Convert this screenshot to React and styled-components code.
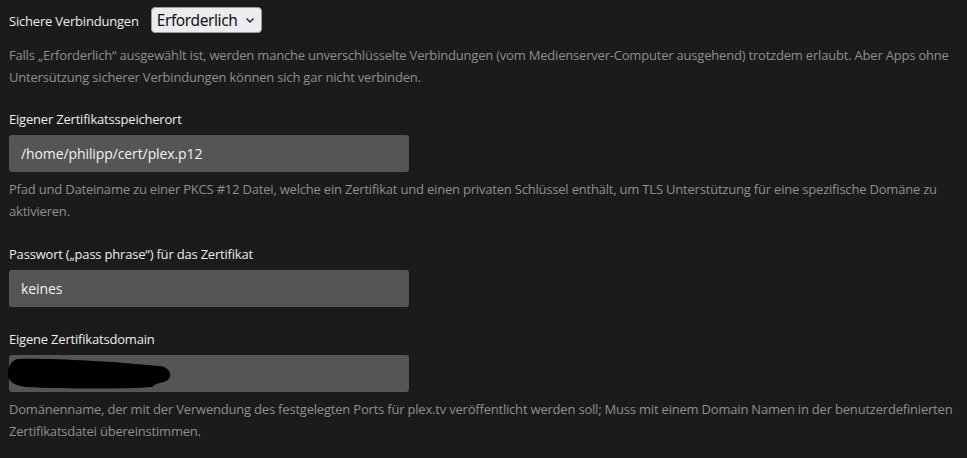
import React from 'react';
import styled, { createGlobalStyle } from 'styled-components';

const GlobalStyle = createGlobalStyle`
  html, body {
    margin: 0;
    background: #1b1b1b;
  }
  body {
    font-family: "Open Sans", "Noto Sans", sans-serif;
  }
`

const Page = styled.div`
  padding: 7px 9px 0 9px;
  width: 950px;
  color: #eaeaea;
  font-size: 13px;
  letter-spacing: -0.2px;
`

const Row = styled.div`
  display: flex;
  align-items: center;
  gap: 12px;
  height: 26px;
`

const Label = styled.div`
  line-height: 22px;
  color: #ececec;
  margin-bottom: ${props => props.inline ? '0' : '5px'};
  margin-top: ${props => props.inline ? '2px' : '0'};
`

const SelectBox = styled.div`
  display: flex;
  align-items: center;
  gap: 8px;
  height: 24px;
  padding: 0 6px 0 5px;
  background: #ececf0;
  border: 1px solid #9a9a9a;
  border-radius: 4px;
  color: #111;
  font-family: "Noto Sans", "Open Sans", sans-serif;
  font-size: 15.5px;
  letter-spacing: -0.4px;
`

const Help = styled.p`
  margin: ${props => props.first ? '11px' : '6px'} 0 0 0;
  line-height: 22px;
  color: #8e8e8e;
`

const Group = styled.div`
  margin-top: ${props => props.gap || 21}px;
`

const FieldWrap = styled.div`
  position: relative;
  width: 400px;
`

const Input = styled.div`
  box-sizing: border-box;
  width: 400px;
  height: 37px;
  padding: 0 12px;
  display: flex;
  align-items: center;
  background: #555555;
  border-radius: 3px;
  color: #f2f2f2;
  font-size: 14px;
  letter-spacing: -0.1px;
`

const Redaction = styled.svg`
  position: absolute;
  left: -2px;
  top: 2px;
`

function Chevron() {
  return (
    <svg width="10" height="7" viewBox="0 0 10 7">
      <path d="M1.5 1.5 L5 5 L8.5 1.5" fill="none" stroke="#222" strokeWidth="1.4" />
    </svg>
  );
}

export default function App() {
  return (
    <Page>
      <GlobalStyle />
      <Row>
        <Label inline>Sichere Verbindungen</Label>
        <SelectBox>Erforderlich <Chevron /></SelectBox>
      </Row>
      <Help first>
        Falls „Erforderlich“ ausgewählt ist, werden manche unverschlüsselte Verbindungen (vom Medienserver-Computer ausgehend) trotzdem erlaubt. Aber Apps ohne Untersützung sicherer Verbindungen können sich gar nicht verbinden.
      </Help>

      <Group gap={20}>
        <Label>Eigener Zertifikatsspeicherort</Label>
        <Input>/home/philipp/cert/plex.p12</Input>
        <Help>
          Pfad und Dateiname zu einer PKCS #12 Datei, welche ein Zertifikat und einen privaten Schlüssel enthält, um TLS Unterstützung für eine spezifische Domäne zu aktivieren.
        </Help>
      </Group>

      <Group>
        <Label>Passwort („pass phrase“) für das Zertifikat</Label>
        <Input>keines</Input>
      </Group>

      <Group>
        <Label>Eigene Zertifikatsdomain</Label>
        <FieldWrap>
          <Input />
          <Redaction width="168" height="34" viewBox="0 0 168 34">
            <path
              d="M12 2 C40 1 100 4 152 9 C165 10 167 22 157 25 C152 26 148 27 145 30 C120 32 60 32 20 30 C4 29 0 21 1 15 C2 7 6 2 12 2 Z"
              fill="#000"
            />
          </Redaction>
        </FieldWrap>
        <Help>
          Domänenname, der mit der Verwendung des festgelegten Ports für plex.tv veröffentlicht werden soll; Muss mit einem Domain Namen in der benutzerdefinierten Zertifikatsdatei übereinstimmen.
        </Help>
      </Group>
    </Page>
  );
}
